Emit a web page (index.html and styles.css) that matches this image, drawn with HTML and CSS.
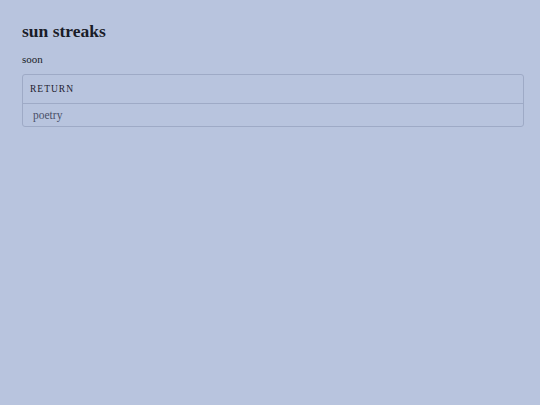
FILE: index.html
```html
<!DOCTYPE html>
<html>
<head>
<meta charset="utf-8">
<link rel="stylesheet" href="styles.css">
</head>
<body>
<main class="page">
  <h1 class="title">sun streaks</h1>
  <p class="status">soon</p>
  <section class="panel">
    <div class="panel-head">RETURN</div>
    <div class="panel-body">poetry</div>
  </section>
</main>
</body>
</html>
```
FILE: styles.css
```css
html, body {
  margin: 0;
  padding: 0;
  background: #b8c4de;
}
body {
  font-family: "Liberation Serif", "DejaVu Serif", serif;
  color: #1a1c28;
}
.page {
  padding: 20px 16px 0 22px;
}
.title {
  margin: 0;
  font-size: 17.5px;
  font-weight: bold;
  line-height: 22px;
}
.status {
  margin: 10px 0 0;
  font-size: 11px;
  line-height: 14px;
}
.panel {
  margin-top: 8px;
  border: 1px solid #9eaac6;
  border-radius: 3px;
}
.panel-head {
  height: 28px;
  line-height: 28px;
  padding-left: 7px;
  font-size: 9.5px;
  letter-spacing: 1px;
  border-bottom: 1px solid #9eaac6;
  color: #1e2130;
}
.panel-body {
  height: 22px;
  line-height: 22px;
  padding-left: 10px;
  font-size: 11.5px;
  color: #4a5068;
}
```
